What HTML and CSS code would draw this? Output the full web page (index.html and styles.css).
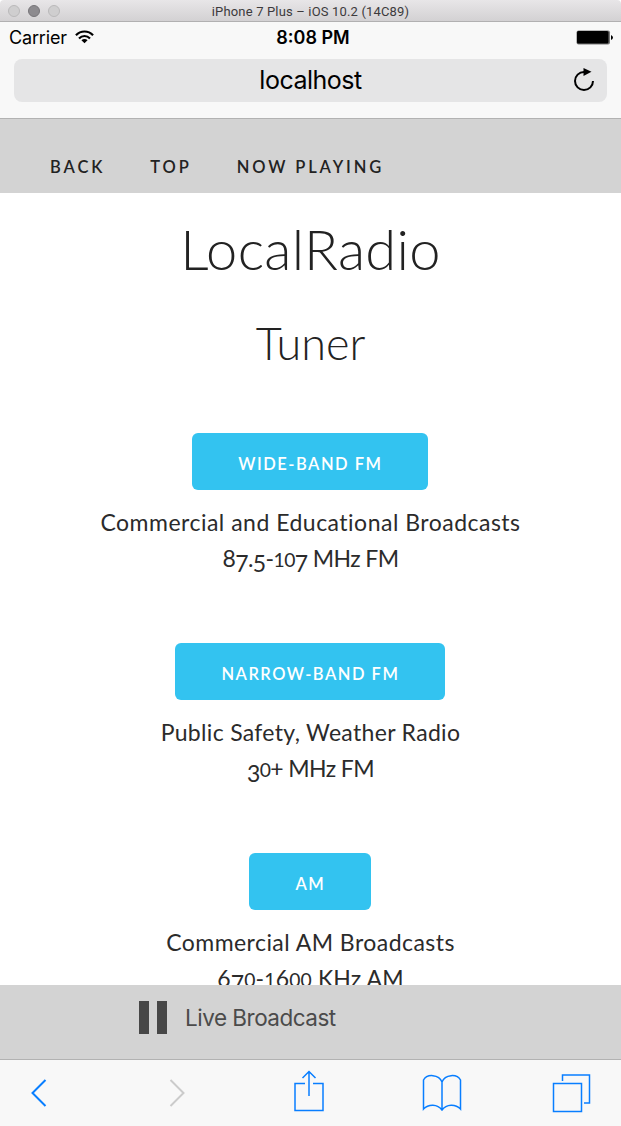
FILE: index.html
```
<!DOCTYPE html>
<html lang="en">
<head>
<meta charset="utf-8">
<title>LocalRadio</title>
<link rel="stylesheet" href="styles.css">
</head>
<body>
<div class="window">
  <header class="titlebar">
    <div class="lights"><i></i><i class="dark"></i><i></i></div>
    <span class="window-title">iPhone 7 Plus – iOS 10.2 (14C89)</span>
  </header>
  <section class="safari">
    <div class="status">
      <div class="carrier"><span>Carrier</span>
        <svg width="19" height="14" viewBox="0 0 20 14" fill="none" stroke="#000" stroke-width="2.3"><path d="M1 5.2C6-.1 14-.1 19 5.2M4.2 8.5c3.4-3.4 8.2-3.4 11.600 0"/><path d="M10 13.600 6.800 10.400c1.800-1.700 4.600-1.700 6.400 0z" fill="#000" stroke="none"/></svg>
      </div>
      <span class="time">8:08 PM</span>
      <svg class="battery" width="37" height="15" viewBox="0 0 37 15"><rect x=".5" y=".5" width="33.5" height="14" rx="2" fill="#777"/><rect x="1" y="1" width="31.5" height="12.5" rx="1.5"/><path d="M35 5v5q2-1 2-2.500t-2-2.500z"/></svg>
    </div>
    <div class="address"><span class="host">localhost</span>
      <svg class="reload" width="22" height="24" viewBox="0 0 22 24"><path d="M11 4A9 9 0 1 0 20 13" fill="none" stroke="#000" stroke-width="2"/><path d="M10.500 0v8l8-4.200z"/></svg>
    </div>
  </section>
  <nav class="nav"><a class="back">Back</a><a class="top">Top</a><a class="now">Now Playing</a></nav>
  <main class="page">
    <h1>LocalRadio</h1>
    <h2>Tuner</h2>
    <section class="band">
      <a class="button wide">Wide-Band FM</a>
      <p class="line l1">Commercial and Educational Broadcasts</p>
      <p class="line l2">8<b class="low">7</b>.<b class="low">5</b>-<b class="sm">10</b><b class="low">7</b> MHz FM</p>
    </section>
    <section class="band">
      <a class="button narrow">Narrow-Band FM</a>
      <p class="line l3">Public Safety, Weather Radio</p>
      <p class="line l4"><b class="low">3</b><b class="sm">0</b>+ MHz FM</p>
    </section>
    <section class="band">
      <a class="button am">AM</a>
      <p class="line l5">Commercial AM Broadcasts</p>
      <p class="line l6">6<b class="low">7</b><b class="sm">0</b>-<b class="sm">1</b>6<b class="sm">00</b> KHz AM</p>
    </section>
  </main>
  <section class="player">
    <svg width="28" height="33" viewBox="0 0 28 33" fill="#474747"><path d="M0 0h10v33H0zM18 0h10v33H18z"/></svg>
    <span class="live">Live Broadcast</span>
  </section>
  <footer class="toolbar">
    <svg width="16" height="28" viewBox="0 0 16 28" class="ico"><path d="M14.500 1 1.500 14l13 13" stroke-width="2"/></svg>
    <svg width="16" height="28" viewBox="0 0 16 28" class="ico off"><path d="m1.500 1 13 13-13 13" stroke-width="2"/></svg>
    <svg width="30" height="42" viewBox="0 0 30 42" class="ico share"><path d="M11 13.500H1v27h28v-27H19M15 26V1.500M8.500 8 15 1.500 21.500 8"/></svg>
    <svg width="40" height="38" viewBox="0 0 40 38" class="ico book"><path d="M20 8v28M20 8C17 .2 5-.5 1.500 6v29c5-5.300 14-5.300 18.500 1 4.500-6.300 13.500-6.300 18.500-1V6C35-.5 23 .2 20 8z"/></svg>
    <svg width="40" height="40" viewBox="0 0 40 40" class="ico tabs"><path d="M1.500 10.500h28v28h-28zM10.500 8V2h27v28H32"/></svg>
  </footer>
</div>
</body>
</html>
```
FILE: styles.css
```
* { box-sizing: border-box; }
body { margin: 0; background: #fff; font-family: Inter, "Liberation Sans", sans-serif; }
.window { width: 621px; height: 1126px; display: flex; flex-direction: column; overflow: hidden; }
.titlebar { flex: none; height: 22px; background: linear-gradient(#e8e6e8, #d3d1d3); border-bottom: 1px solid #b1b0b1; display: grid; grid-template-columns: 100px 1fr 100px; align-items: center; border-radius: 4px 4px 0 0; }
.lights { display: flex; gap: 8px; padding-left: 8px; }
.lights i { width: 12px; height: 12px; border-radius: 50%; background: #cfcecf; border: 1px solid #bab9ba; }
.lights .dark { background: #8d8b8f; border-color: #777579; }
.window-title { text-align: center; font: 13px/21px Roboto, sans-serif; letter-spacing: .16px; padding-top: 1px; color: #3c3a3c; white-space: nowrap; }
.safari { flex: none; height: 97px; background: #f8f8f8; border-bottom: 1px solid #b2b2b2; }
.status { height: 31px; display: grid; grid-template-columns: 1fr auto 1fr; align-items: center; padding: 0 8px 0 9px; }
.carrier { display: flex; align-items: center; gap: 8px; font-size: 18px; letter-spacing: -.15px; }
.carrier svg { margin-top: -2px; }
.time { font-size: 18px; font-weight: 600; padding-left: 4px; }
.battery { justify-self: end; }
.address { height: 43px; margin: 6px 14px 0; padding: 0 12px 2px; background: #e5e5e6; border-radius: 8px; display: grid; grid-template-columns: 22px 1fr 22px; align-items: center; }
.host { grid-column: 2; text-align: center; font-size: 25px; letter-spacing: -.5px; }
.nav { flex: none; height: 74px; background: #d3d3d3; display: flex; gap: 45px; padding: 36px 0 0 50px; font: 600 16.500px/24px Lato, sans-serif; text-transform: uppercase; letter-spacing: 2.900px; color: #222; }
.page { flex: none; height: 792px; overflow: hidden; text-align: center; color: #222; font-family: Lato, sans-serif; background: #fff; }
h1 { margin: 23px 0 0; font-weight: 300; font-size: 56px; line-height: 65px; letter-spacing: .3px; }
h2 { margin: 37px 0 0; font-weight: 300; font-size: 45px; line-height: 50px; }
.band { height: 210px; }
h2 + .band { margin-top: 65px; }
.button { display: block; height: 57px; border-radius: 6px; background: #33c3f0; color: #fff; font-weight: 600; font-size: 16.500px; line-height: 62px; letter-spacing: 1.500px; text-transform: uppercase; }
.wide { width: 236px; margin-left: 192.400px; }
.narrow { width: 270px; margin-left: 175.400px; }
.am { width: 122px; margin-left: 249.400px; }
.line { margin: 0; font-size: 23px; line-height: 36px; white-space: nowrap; color: #2b2b2b; }
.button + .line { margin-top: 14px; }
.line b { font-weight: 400; line-height: 0; }
.low { vertical-align: -.2em; }
.sm { font-size: .84em; }
.l1 { letter-spacing: .49px; }
.l2, .l4 { letter-spacing: -.6px; }
.l3 { letter-spacing: .32px; }
.l5 { letter-spacing: .45px; }
.l6 { letter-spacing: .15px; }
.player { flex: none; height: 74px; background: #d3d3d3; display: flex; align-items: flex-start; gap: 18px; padding: 16px 0 0 139px; }
.live { font-size: 22.500px; line-height: 34px; letter-spacing: -.5px; color: #4b4b4b; }
.toolbar { flex: none; height: 67px; background: #f8f8f8; border-top: 1px solid #b2b2b2; display: flex; align-items: center; padding: 0 0 0 31px; }
.ico { flex: none; fill: none; stroke: #087eff; stroke-width: 1.500; }
.off { stroke: #cbcbcb; margin-left: 122px; }
.share { margin: -4px 0 0 109px; }
.book { margin-left: 98px; }
.tabs { margin-left: 90px; }
```
